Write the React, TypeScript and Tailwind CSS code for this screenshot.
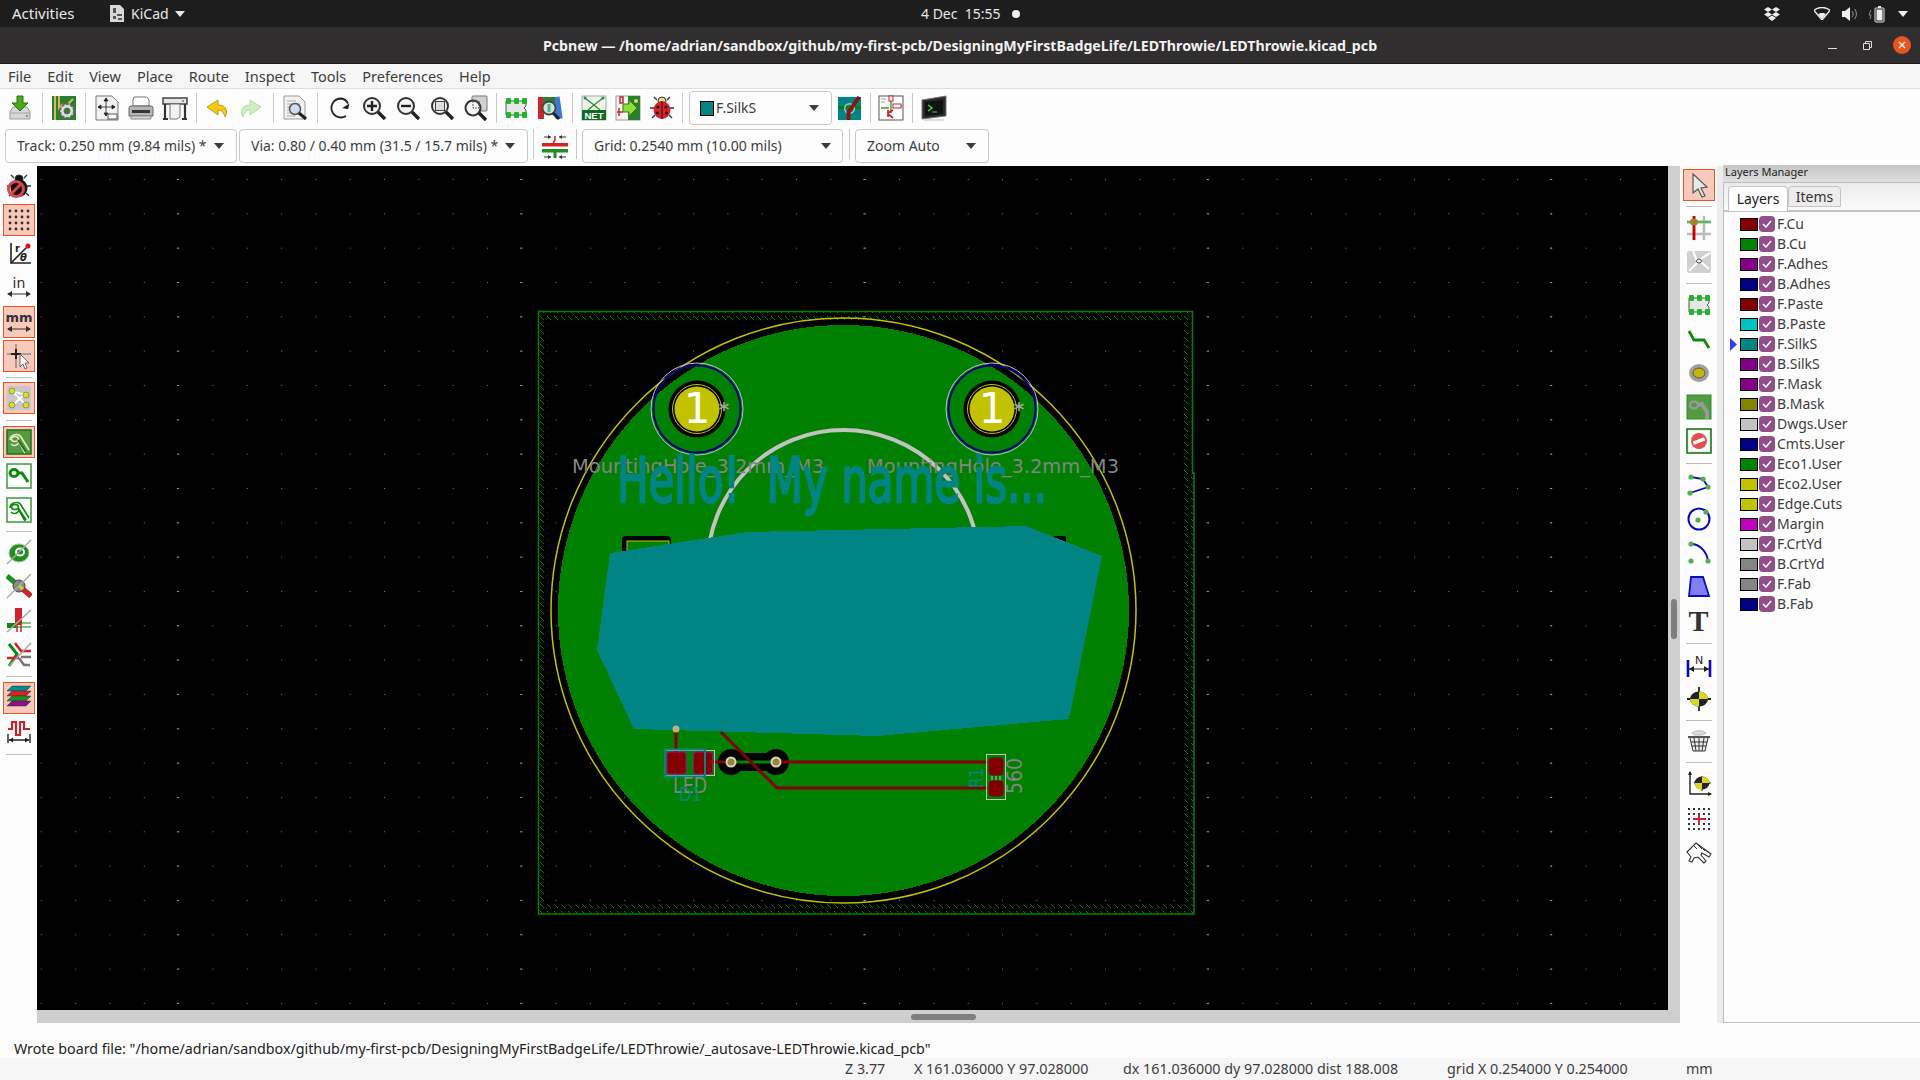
import React from "react";

// Layer list for the manager panel
const LAYERS = [
  { name: "F.Cu", color: "#840000" },
  { name: "B.Cu", color: "#008400" },
  { name: "F.Adhes", color: "#840084" },
  { name: "B.Adhes", color: "#000084" },
  { name: "F.Paste", color: "#840000" },
  { name: "B.Paste", color: "#00c2c2" },
  { name: "F.SilkS", color: "#008484", active: true },
  { name: "B.SilkS", color: "#840084" },
  { name: "F.Mask", color: "#840084" },
  { name: "B.Mask", color: "#848400" },
  { name: "Dwgs.User", color: "#c2c2c2" },
  { name: "Cmts.User", color: "#000084" },
  { name: "Eco1.User", color: "#008400" },
  { name: "Eco2.User", color: "#c2c200" },
  { name: "Edge.Cuts", color: "#c2c200" },
  { name: "Margin", color: "#c200c2" },
  { name: "F.CrtYd", color: "#c2c2c2" },
  { name: "B.CrtYd", color: "#848484" },
  { name: "F.Fab", color: "#848484" },
  { name: "B.Fab", color: "#000084" },
];

const Ic = ({ children, size = 26 }: { children: React.ReactNode; size?: number }) => (
  <svg width={size} height={size} viewBox="0 0 26 26" fill="none">
    {children}
  </svg>
);

const Caret = ({ color = "#3d3d3d" }: { color?: string }) => (
  <svg width="10" height="6" viewBox="0 0 10 6">
    <path d="M0 0h10L5 6z" fill={color} />
  </svg>
);

const Tool = ({ children }: { children: React.ReactNode }) => (
  <div className="w-[34px] h-[34px] shrink-0 flex items-center justify-center">{children}</div>
);

const VSep = ({ className }: { className: string }) => (
  <div className={`${className} h-[30px] shrink-0 flex justify-center`}>
    <div className="w-px h-full bg-[#c9c9c9]" />
  </div>
);

const HSep = ({ className }: { className: string }) => (
  <div className={`${className} w-full shrink-0 flex items-center justify-center`}>
    <div className="w-[26px] h-px bg-[#bdbdbd]" />
  </div>
);

// Square side tool, optionally in the pressed orange state
const Side = ({ on, children }: { on?: boolean; children: React.ReactNode }) => (
  <div className="w-full h-[34px] shrink-0 flex items-center justify-center">
    <div className={on ? "w-[32px] h-[32px] border border-[#e95420] bg-[#f9c9bb] flex items-center justify-center" : "w-[32px] h-[32px] flex items-center justify-center"}>
      {children}
    </div>
  </div>
);

const Combo = ({ className, children }: { className: string; children: React.ReactNode }) => (
  <div className={`${className} h-[34px] shrink-0 border border-[#c8c8c8] rounded-[4px] bg-[#fdfdfd] flex items-center justify-between text-[14px] text-[#3d3d3d]`}>
    {children}
  </div>
);

const Glass = ({ children }: { children?: React.ReactNode }) => (
  <Ic>
    <circle cx="11" cy="11" r="8" stroke="#333" strokeWidth="2" fill="#f4f4f4" />
    {children}
    <path d="M17 17l7 7" stroke="#222" strokeWidth="3.4" />
  </Ic>
);

const Chip = () => (
  <Ic>
    <path d="M3 6h20v5l-2 2 2 2v5H3z" fill="#e6e6e6" stroke="#555" />
    {[3, 11, 19].map((x) => (
      <g key={x}>
        <rect x={x} y="3" width="5" height="6" rx="1" fill="#22b52c" />
        <rect x={x} y="17" width="5" height="6" rx="1" fill="#22b52c" />
      </g>
    ))}
  </Ic>
);

const Bug = ({ off }: { off?: boolean }) => (
  <Ic>
    <path d="M8 5L5 2M18 5l3-3M5 13H1M25 13h-4M6 20l-3 3M20 20l3 3" stroke="#333" strokeWidth="1.4" />
    <circle cx="13" cy="6" r="4" fill={off ? "#111" : "#e8d890"} stroke="#333" />
    <ellipse cx="13" cy="15" rx="8.5" ry="9" fill={off ? "#111" : "#d3242c"} />
    {!off && (
      <g fill="#301010">
        <path d="M13 6v18" stroke="#301010" />
        <circle cx="9" cy="12" r="1.6" />
        <circle cx="17" cy="12" r="1.6" />
        <circle cx="8.5" cy="18" r="1.6" />
        <circle cx="17.5" cy="18" r="1.6" />
      </g>
    )}
    {off && (
      <g>
        <circle cx="10" cy="16" r="7.5" stroke="#d8474a" strokeWidth="3" fill="none" />
        <path d="M5 21L15 11" stroke="#d8474a" strokeWidth="3" />
      </g>
    )}
  </Ic>
);

const Meander = () => (
  <Ic>
    <path d="M2 10h4V3h4v13h4V3h4v7h6" stroke="#c8262a" strokeWidth="2.2" />
    <path d="M2 15v9M24 15v9M3 21h20" stroke="#222" strokeWidth="1.4" />
    <path d="M3 21l4-2.5v5zM23 21l-4-2.5v5z" fill="#222" />
  </Ic>
);

// Route tool: single or differential trace with a round end
const TraceIcon = ({ inner, filled }: { inner?: boolean; filled?: boolean }) => {
  const line = filled ? "#f0e6c0" : "#0c8a0c";
  return (
    <Ic>
      <rect x="1" y="1" width="24" height="24" fill={filled ? "#539b3f" : "#fff"} stroke={filled ? "#1f6f1f" : "#3a9a3a"} strokeWidth="1.5" />
      {inner ? (
        <g>
          <path d="M4 11c0-6 9-7 11-3l8 13" stroke={line} strokeWidth="1.6" />
          <path d="M5 15c3 3 7 1 8-2l6 11" stroke={line} strokeWidth="1.6" />
          <ellipse cx="9" cy="10" rx="3.5" ry="2.5" stroke={line} strokeWidth="1.6" />
          <path d="M12 11l8 12" stroke={filled ? "#1f6f1f" : "#0c8a0c"} strokeWidth="2" />
        </g>
      ) : (
        <g>
          <ellipse cx="8" cy="10" rx="4" ry="3.5" stroke="#0c8a0c" strokeWidth="3" />
          <path d="M12 10h4l6 9" stroke="#0c8a0c" strokeWidth="3" />
        </g>
      )}
    </Ic>
  );
};

const Dots = () => (
  <Ic>
    {[5, 11, 17, 23].map((x) => [5, 11, 17, 23].map((y) => <circle key={`${x}-${y}`} cx={x - 1} cy={y - 1} r="1.4" fill="#333" />))}
  </Ic>
);

const Pcb = () => (
  <svg width="1631" height="844" viewBox="37 166 1631 844" fill="none" className="block">
    <defs>
      <pattern id="grid" x="1311" y="179" width="34.33" height="34.33" patternUnits="userSpaceOnUse">
        <rect width="1" height="1" fill="#777" />
      </pattern>
      <pattern id="gridBright" x="1550" y="179" width="343.3" height="34.33" patternUnits="userSpaceOnUse">
        <rect width="2" height="1" fill="#999" />
      </pattern>
      <pattern id="hatch" x="0" y="0" width="7" height="7" patternUnits="userSpaceOnUse">
        <path d="M1 1l4 4" stroke="#008400" strokeWidth="1" />
      </pattern>
    </defs>
    <rect x="37" y="166" width="1631" height="844" fill="#000" />
    <rect x="37" y="166" width="1631" height="844" fill="url(#grid)" />
    <rect x="37" y="166" width="1631" height="844" fill="url(#gridBright)" />

    {/* page frame with hatching */}
    <path d="M543 316H1187V478H1189V909H543Z" stroke="url(#hatch)" strokeWidth="9" />
    <path d="M538.5 311.5H1192.5V473H1194V914H538.5Z" stroke="#008400" strokeWidth="1.5" />

    <circle cx="843.5" cy="610.5" r="292.5" stroke="#c2c200" strokeWidth="1.5" />
    <circle cx="843.5" cy="610.5" r="285.5" fill="#008000" shapeRendering="crispEdges" />

    {/* arc on the silk */}
    <circle cx="843.5" cy="566" r="136" stroke="#c2c2c2" strokeWidth="4" />

    {/* mounting holes */}
    {[697, 992].map((x) => (
      <g key={x}>
        <circle cx={x} cy="409" r="46" stroke="#c2c2c2" strokeWidth="1" />
        <circle cx={x} cy="409" r="43.5" stroke="#000084" strokeWidth="2" />
        <circle cx={x} cy="409" r="28.5" fill="#000" />
        <circle cx={x} cy="409" r="24.5" fill="#000" stroke="#c2c200" strokeWidth="1" />
        <circle cx={x} cy="409" r="22.5" fill="#c2c200" />
        <text x={x} y="423" textAnchor="middle" fontSize="42" fill="#fff" fontFamily="'DejaVu Sans', sans-serif">1</text>
        <text x={x + 27} y="416" textAnchor="middle" fontSize="20" fontWeight="700" fill="#a0a0a0" fontFamily="'DejaVu Sans', sans-serif">*</text>
      </g>
    ))}

    <text x="572" y="473" fontSize="20" textLength="252" lengthAdjust="spacingAndGlyphs" fill="#848484" fontFamily="'DejaVu Sans', sans-serif">MountingHole_3.2mm_M3</text>
    <text x="867" y="473" fontSize="20" textLength="252" lengthAdjust="spacingAndGlyphs" fill="#848484" fontFamily="'DejaVu Sans', sans-serif">MountingHole_3.2mm_M3</text>
    <text x="617" y="502" fontSize="62" textLength="430" lengthAdjust="spacingAndGlyphs" fill="#008484" stroke="#008484" strokeWidth="2.4" fontFamily="'DejaVu Sans', sans-serif" className="whitespace-pre">Hello!  My name is...</text>

    {/* parts hidden by the silk polygon */}
    <rect x="622" y="536" width="49" height="24" rx="4" fill="#000" />
    <rect x="627" y="541" width="42" height="20" fill="#008000" stroke="#c2c200" strokeWidth="1" />
    <rect x="1052" y="536" width="14" height="12" rx="2" fill="#000" />

    <polygon points="610,553 747,532 1026,526 1102,556 1069,719 877,736 634,729 597,650" fill="#008484" shapeRendering="crispEdges" />

    {/* traces */}
    <path d="M676 731V752" stroke="#840000" strokeWidth="3" />
    <circle cx="676" cy="729" r="3.5" fill="#c2b080" />
    <rect x="731" y="753" width="45" height="18" fill="#000" />
    <circle cx="731" cy="762" r="13" fill="#000" />
    <circle cx="776" cy="762" r="13" fill="#000" />
    <path d="M713 762H725M782 762H992" stroke="#840000" strokeWidth="3" />
    <path d="M736 762H771" stroke="#008400" strokeWidth="3" />
    <path d="M721 732L777 788H992" stroke="#840000" strokeWidth="3" />
    {[731, 776].map((x) => (
      <g key={x}>
        <circle cx={x} cy="762" r="5.5" fill="#d8d8c8" />
        <circle cx={x} cy="762" r="3.5" fill="#a08430" />
      </g>
    ))}

    {/* LED footprint */}
    <rect x="664.5" y="750.5" width="50" height="25" stroke="#c2c2c2" strokeWidth="1" />
    <rect x="667" y="752" width="19" height="22" rx="3" fill="#840000" stroke="#a000a0" strokeWidth="1" />
    <rect x="693.5" y="752" width="19" height="22" rx="3" fill="#840000" stroke="#a000a0" strokeWidth="1" />
    <rect x="665" y="749.5" width="40" height="27" stroke="#008484" strokeWidth="2" />
    <text x="673" y="793" fontSize="22" textLength="34" lengthAdjust="spacingAndGlyphs" fill="#848484" fontFamily="'DejaVu Sans', sans-serif">LED</text>
    <text x="679" y="801" fontSize="20" textLength="23" lengthAdjust="spacingAndGlyphs" fill="#008484" fontFamily="'DejaVu Sans', sans-serif">D1</text>

    {/* resistor footprint */}
    <rect x="986.5" y="754.5" width="19" height="45" stroke="#c2c2c2" strokeWidth="1" />
    <rect x="988" y="757" width="16" height="19" rx="4" fill="#840000" stroke="#008400" strokeWidth="1" />
    <rect x="988" y="780" width="16" height="17" rx="4" fill="#840000" stroke="#008400" strokeWidth="1" />
    <path d="M992 776v4M996 776v4M1000 776v4" stroke="#c2c2c2" strokeWidth="1" />
    <text transform="translate(983 788) rotate(-90)" fontSize="20" textLength="20" lengthAdjust="spacingAndGlyphs" fill="#008484" fontFamily="'DejaVu Sans', sans-serif">R1</text>
    <text transform="translate(1022 794) rotate(-90)" fontSize="21" textLength="36" lengthAdjust="spacingAndGlyphs" fill="#848484" fontFamily="'DejaVu Sans', sans-serif">560</text>
  </svg>
);

export default function App() {
  return (
    <div className="w-[1920px] h-[1080px] overflow-hidden flex flex-col bg-[#fdfdfd] font-['Noto_Sans',sans-serif] text-[14px] leading-none">
      {/* ─── GNOME top bar ─── */}
      <div className="h-[27px] shrink-0 bg-[#1d1d1d] text-[#e8e8e8] flex items-center">
        <span className="w-[109px] pl-[12px] shrink-0 text-[15px]">Activities</span>
        <svg width="16" height="17" viewBox="0 0 16 17" className="shrink-0">
          <path d="M1 0h10l4 4v13H1z" fill="#d8d8d8" />
          <path d="M4 3h3v5H4zM8 9h5v2H8zM4 11h3v3H4zM9 13h4v2H9z" fill="#555" />
        </svg>
        <span className="ml-[6px] w-[44px] shrink-0">KiCad</span>
        <Caret color="#e8e8e8" />
        <span className="ml-[736px] w-[91px] shrink-0">4 Dec&nbsp;&nbsp;15:55</span>
        <span className="w-[8px] h-[8px] rounded-full bg-[#efefef] shrink-0" />
        <svg width="16" height="14" viewBox="0 0 16 14" className="ml-[744px] shrink-0">
          <path d="M4 0l4 2.5L4 5 0 2.5zM12 0l4 2.5L12 5 8 2.5zM4 5l4 2.5L4 10 0 7.5zM12 5l4 2.5-4 2.5-4-2.5zM8 8.5l4 2.5-4 3-4-3z" fill="#eee" />
        </svg>
        <svg width="16" height="13" viewBox="0 0 16 13" className="ml-[34px] shrink-0">
          <path d="M0 3.5C4-.5 12-.5 16 3.5L8 13z" fill="none" stroke="#eee" strokeWidth="1.4" />
          <path d="M4 7c2-1.500 6-1.500 8 0l-4 5z" fill="#eee" />
        </svg>
        <svg width="15" height="14" viewBox="0 0 15 14" className="ml-[12px] shrink-0">
          <path d="M0 4h3l5-4v14l-5-4H0z" fill="#eee" />
          <path d="M10 4c1.500 2 1.500 4 0 6M12.500 2c2.500 3 2.500 7 0 10" stroke="#999" fill="none" />
        </svg>
        <svg width="18" height="18" viewBox="0 0 18 18" className="ml-[11px] shrink-0">
          <path d="M3 5L1 10h2l-1 4" stroke="#888" fill="none" />
          <rect x="7" y="3" width="9" height="14" rx="1" fill="none" stroke="#eee" />
          <rect x="8.500" y="4.500" width="6" height="11" fill="#eee" />
          <rect x="10" y="1" width="3" height="2" fill="#eee" />
        </svg>
        <span className="ml-[12px]"><Caret color="#eee" /></span>
      </div>

      {/* ─── Title bar ─── */}
      <div className="h-[37px] shrink-0 bg-[#302e2e] border-b border-[#1a1a1a] text-[#f2f2f2] font-bold text-[14.2px] grid grid-cols-[1fr_auto_1fr] items-center">
        <div />
        <span className="pt-[2px]">Pcbnew — /home/adrian/sandbox/github/my-first-pcb/DesigningMyFirstBadgeLife/LEDThrowie/LEDThrowie.kicad_pcb</span>
        <div className="flex items-center justify-end pr-[9px]">
          <span className="w-[9px] h-px bg-[#ddd] mt-[6px]" />
          <svg width="9" height="9" viewBox="0 0 9 9" className="ml-[26px]">
            <path d="M.5 2.500h6v6h-6zM2.500 2.500v-2h6v6h-2" fill="none" stroke="#ddd" />
          </svg>
          <div className="ml-[21px] w-[18px] h-[18px] rounded-full bg-[#e95420] flex items-center justify-center">
            <svg width="8" height="8" viewBox="0 0 8 8"><path d="M1 1l6 6M7 1L1 7" stroke="#fff" strokeWidth="1.200" /></svg>
          </div>
        </div>
      </div>

      {/* ─── Menu bar ─── */}
      <div className="h-[25px] shrink-0 bg-[#f6f6f6] border-b border-[#dedede] flex items-center pl-[8px] text-[#3d3d3d] text-[14.500px] gap-[16px]">
        {["File", "Edit", "View", "Place", "Route", "Inspect", "Tools", "Preferences", "Help"].map((m) => (
          <span key={m}>{m}</span>
        ))}
      </div>

      {/* ─── Main toolbar ─── */}
      <div className="h-[40px] shrink-0 flex items-center pl-[3px] pb-[2px]">
        <Tool><Ic><path d="M3 17l3-5h14l3 5v7H3z" fill="#d6d6d6" stroke="#999" /><path d="M3 18h20" stroke="#aaa" /><circle cx="20" cy="21" r="1" fill="#3a3" /><path d="M10 1h6v7h5l-8 8-8-8h5z" fill="#4aa81e" stroke="#2d6e10" /></Ic></Tool>
        <VSep className="w-[10px]" />
        <Tool>
          <Ic>
            <rect x="1" y="1" width="24" height="24" fill="#2a7f2a" />
            <path d="M4 1v24M8 1v12l4-4M22 4l-6 6" stroke="#d9b560" strokeWidth="2" />
            <circle cx="16" cy="16" r="7" fill="#ddd" stroke="#666" strokeWidth="2" strokeDasharray="3 1.500" />
            <circle cx="16" cy="16" r="3" fill="#2a7f2a" stroke="#666" />
          </Ic>
        </Tool>
        <VSep className="w-[9px]" />
        <Tool><Ic><path d="M2 1h16l6 6v18H2z" fill="#f2f2f2" stroke="#777" /><path d="M12 3v18M4 12h17M12 3l-2 3h4zM12 21l-2-3h4zM4 12l3-2v4zM21 12l-3-2v4z" fill="#222" stroke="#222" strokeWidth=".8" /><rect x="14" y="19" width="9" height="5" fill="#fff" stroke="#555" /></Ic></Tool>
        <Tool><Ic><path d="M6 2h13l2 3v6H5V5z" fill="#fff" stroke="#777" /><path d="M3 11h20a2 2 0 0 1 2 2v8H1v-8a2 2 0 0 1 2-2z" fill="#b5b5b5" stroke="#666" /><rect x="4" y="15" width="18" height="3" fill="#333" /><path d="M3 21h20v3H3z" fill="#d6d6d6" stroke="#888" /></Ic></Tool>
        <Tool><Ic><path d="M1 3h24v6H1z" fill="#e6e6e6" stroke="#444" strokeWidth="1.500" /><circle cx="21" cy="6" r="1" fill="#3a3" /><path d="M3 9v15M23 9v15M1 24h5M20 24h5" stroke="#333" strokeWidth="2.200" /><path d="M8 9h10v13l-3 2H8z" fill="#f4f4f4" stroke="#777" /></Ic></Tool>
        <VSep className="w-[8px]" />
        <Tool><Ic><path d="M21 23c3-5 2-12-7-12V6L3 13l11 8v-5c4 0 6 3 7 7z" fill="#f6c915" stroke="#c99a10" transform="translate(0 -1)" /></Ic></Tool>
        <Tool><Ic><path d="M5 23c-3-5-2-12 7-12V6l11 7-11 8v-5c-4 0-6 3-7 7z" fill="#cdeec0" stroke="#b3dca4" transform="translate(0 -1)" /></Ic></Tool>
        <VSep className="w-[10px]" />
        <Tool><Ic><path d="M2 1h15l6 6v17H2z" fill="#f2f2f2" stroke="#999" /><path d="M5 6h9M5 9h13M5 12h3M5 15h3M5 18h3M5 21h8" stroke="#aaa" /><circle cx="13" cy="14" r="5.500" fill="#cfdcf0" stroke="#555" strokeWidth="1.500" /><path d="M17 18l7 6" stroke="#222" strokeWidth="3" /></Ic></Tool>
        <VSep className="w-[11px]" />
        <Tool><Ic><path d="M19 21A9.500 9.500 0 1 1 13 3.500c4 0 6.500 2 8 5" stroke="#222" strokeWidth="1.800" /><path d="M22 8v6h-6z" fill="#222" transform="rotate(12 20 10)" /></Ic></Tool>
        <Tool><Glass><path d="M6 11h10M11 6v10" stroke="#222" strokeWidth="2.400" /></Glass></Tool>
        <Tool><Glass><path d="M6 11h10" stroke="#222" strokeWidth="2.400" /></Glass></Tool>
        <Tool><Glass><rect x="6.500" y="6.500" width="9" height="9" fill="#ddd" stroke="#444" /></Glass></Tool>
        <Tool><Ic><rect x="9" y="1" width="15" height="15" rx="1" fill="#d0d0d0" stroke="#777" /><circle cx="10" cy="13" r="7.500" stroke="#333" strokeWidth="2" fill="#f6f6f6" /><rect x="10" y="6" width="6" height="7" fill="none" stroke="#555" strokeDasharray="2 1" /><path d="M16 18l7 7" stroke="#222" strokeWidth="3.400" /></Ic></Tool>
        <VSep className="w-[6px]" />
        <Tool><Chip /></Tool>
        <Tool><Ic><rect x="1" y="2" width="6" height="22" fill="#c8262a" /><rect x="17" y="2" width="7" height="22" fill="#3b78d8" transform="rotate(-8 20 12)" /><rect x="6" y="2" width="12" height="6" fill="#2a7f2a" /><circle cx="12" cy="13" r="6.500" fill="#cfe8cf" stroke="#444" strokeWidth="1.800" /><path d="M12 9v8" stroke="#5aa" strokeWidth="3" /><path d="M16 18l6 6" stroke="#222" strokeWidth="3" /></Ic></Tool>
        <VSep className="w-[10px]" />
        <Tool><Ic><rect x="1" y="1" width="24" height="24" fill="#eef3ee" stroke="#aaa" /><path d="M4 3l9 7 9-7M13 10l-6 5M13 10l6 5" stroke="#2f8a2f" strokeWidth="1.200" /><circle cx="4" cy="3" r="1.500" fill="#2f8a2f" /><circle cx="22" cy="3" r="1.500" fill="#2f8a2f" /><rect x="1" y="15" width="24" height="10" fill="#0f6d22" /><text x="13" y="24" textAnchor="middle" fontSize="9.500" fontWeight="700" fill="#fff" fontFamily="'Liberation Sans', sans-serif">NET</text></Ic></Tool>
        <Tool><Ic><rect x="1" y="1" width="24" height="24" fill="#f4f4f4" stroke="#999" /><path d="M13 1h12v24H13z" fill="#2a7f2a" /><path d="M5 2h3v6H5zM4 13v8M2 17h6" stroke="#c8262a" strokeWidth="1.500" /><circle cx="21" cy="6" r="2" fill="#d8d870" /><path d="M8 9h6V5l8 8-8 8v-4H8z" fill="#8fdc3a" stroke="#3a7f14" /></Ic></Tool>
        <Tool><Bug /></Tool>
        <VSep className="ml-[-1px] w-[8px]" />
        <Combo className="ml-[3px] w-[143px] pl-[10px] pr-[12px]">
          <div className="flex items-center">
            <span className="w-[14px] h-[15px] bg-[#008484] border border-black" />
            <span className="ml-[2px]">F.SilkS</span>
          </div>
          <Caret />
        </Combo>
        <Tool><Ic size={25}><rect x="1" y="1" width="24" height="24" fill="#008484" /><path d="M1 12h24" stroke="#0a7d0a" strokeWidth="3" /><circle cx="13" cy="13" r="5" stroke="#bbb" strokeWidth="1.500" /><path d="M12 25v-8l11-16" stroke="#8c1212" strokeWidth="4" /></Ic></Tool>
        <VSep className="w-[8px]" />
        <Tool><Ic><rect x="1" y="1" width="24" height="24" fill="#fff" stroke="#555" /><path d="M13 1v7M3 13h8M13 8v10M18 11h6" stroke="#4c9a2a" strokeWidth="1.500" /><rect x="11" y="1" width="4" height="5" fill="#fff" stroke="#c8262a" /><rect x="15" y="9" width="8" height="4" fill="#fff" stroke="#c8262a" /><path d="M10 15v7M10 18l5-3M10 19l5 4" stroke="#c8262a" strokeWidth="1.800" /><path d="M3 4h5M3 7h4" stroke="#999" /></Ic></Tool>
        <VSep className="w-[9px]" />
        <Tool><Ic><path d="M1 5L25 1v20L1 24z" fill="#2a2a2a" stroke="#777" /><path d="M4 7l18-2v14L4 21z" fill="#111" /><path d="M7 10l4 3-4 3" stroke="#30e040" strokeWidth="1.500" /><path d="M11 17h5" stroke="#30e040" /><path d="M3 25h20" stroke="#bbb" /></Ic></Tool>
      </div>

      {/* ─── Second toolbar: sizes and grid ─── */}
      <div className="h-[37px] shrink-0 flex items-start pl-[5px]">
        <Combo className="w-[232px] pl-[11px] pr-[12px]"><span>Track: 0.250 mm (9.84 mils) *</span><Caret /></Combo>
        <Combo className="ml-[2px] w-[289px] pl-[11px] pr-[12px]"><span>Via: 0.80 / 0.40 mm (31.5 / 15.7 mils) *</span><Caret /></Combo>
        <VSep className="w-[10px]" />
        <div className="w-[34px] h-[34px] shrink-0 flex items-center justify-center">
          <svg width="26" height="26" viewBox="0 0 26 26">
            <path d="M2 4h7M17 4h7M2 24h7M17 24h7" stroke="#333" />
            <path d="M9 4l-3-2v4zM17 4l3-2v4zM9 24l-3-2v4zM17 24l3-2v4z" fill="#333" />
            <path d="M13 3v4l-2 3" stroke="#c8262a" strokeWidth="1.500" fill="none" />
            <rect x="0" y="10" width="26" height="3.500" fill="#d5222a" />
            <rect x="0" y="16" width="26" height="3.500" fill="#1f8f1f" />
            <path d="M13 19v6" stroke="#1f8f1f" strokeWidth="3" />
          </svg>
        </div>
        <VSep className="w-[9px]" />
        <Combo className="ml-[1px] w-[261px] pl-[11px] pr-[11px]"><span>Grid: 0.2540 mm (10.00 mils)</span><Caret /></Combo>
        <VSep className="w-[12px]" />
        <Combo className="w-[134px] pl-[11px] pr-[12px]"><span>Zoom Auto</span><Caret /></Combo>
      </div>

      {/* ─── Work area ─── */}
      <div className="h-[857px] shrink-0 flex">
        {/* Left tools */}
        <div className="w-[37px] shrink-0 flex flex-col pt-[3px] bg-[#fdfdfd]">
          <Side><Bug off /></Side>
          <Side on><Dots /></Side>
          <Side><Ic><path d="M5 2v20h20" stroke="#222" strokeWidth="1.600" /><path d="M5 22L22 5" stroke="#222" strokeWidth="1.600" /><circle cx="22" cy="5" r="2.500" fill="#e01010" /><text x="9" y="11" fontSize="10" fontWeight="700" fill="#222" fontFamily="'DejaVu Sans', sans-serif">r</text><text x="14" y="20" fontSize="10" fontStyle="italic" fontWeight="700" fill="#222" fontFamily="'DejaVu Sans', sans-serif">θ</text></Ic></Side>
          <Side><Ic><text x="13" y="13" textAnchor="middle" fontSize="14" fill="#333" fontFamily="'DejaVu Sans', sans-serif">in</text><path d="M2 19h22" stroke="#333" /><path d="M1 19l5-3v6zM25 19l-5-3v6z" fill="#333" /></Ic></Side>
          <Side on><Ic><text x="13" y="13" textAnchor="middle" fontSize="13" fontWeight="700" fill="#333" fontFamily="'DejaVu Sans', sans-serif">mm</text><path d="M2 20h22" stroke="#333" /><path d="M1 20l5-3v6zM25 20l-5-3v6z" fill="#333" /></Ic></Side>
          <Side on><Ic><path d="M1 11h24M10 1v24" stroke="#8c8c8c" strokeWidth="1.600" /><path d="M5 11h10M10 6v10" stroke="#222" strokeWidth="2" /><path d="M14 11l9 9-4 0 2 5-2 1-2-5-3 3z" fill="#fff" stroke="#666" /></Ic></Side>
          <HSep className="h-[8px]" />
          <Side on><Ic><rect x="1" y="1" width="24" height="24" rx="2" fill="#c8c8c8" /><path d="M6 6l14 4M6 6l14 14M7 20L20 8" stroke="#fff" strokeWidth="1.800" /><circle cx="6" cy="6" r="3" fill="#d8e020" stroke="#555" strokeWidth=".5" /><circle cx="20" cy="10" r="3" fill="#d8e020" stroke="#555" strokeWidth=".5" /><circle cx="6" cy="20" r="3" fill="#d8e020" stroke="#555" strokeWidth=".5" /><circle cx="20" cy="20" r="3" fill="#d8e020" stroke="#555" strokeWidth=".5" /></Ic></Side>
          <HSep className="h-[10px]" />
          <Side on><TraceIcon inner filled /></Side>
          <Side><TraceIcon /></Side>
          <Side><TraceIcon inner /></Side>
          <HSep className="h-[8px]" />
          <Side><Ic><ellipse cx="13" cy="14" rx="10" ry="9" fill="#1f8f1f" stroke="#9bc89b" /><ellipse cx="14" cy="13" rx="5" ry="4.500" fill="#fff" /><ellipse cx="14" cy="13" rx="3" ry="2.500" fill="#1f8f1f" /><path d="M1 25L25 1" stroke="#aaa" strokeWidth="1.500" /></Ic></Side>
          <Side><Ic><path d="M1 3l24 20" stroke="#1f8f1f" strokeWidth="5" /><path d="M13 13l12 10" stroke="#d5222a" strokeWidth="5" /><circle cx="13" cy="13" r="6" fill="#888" stroke="#444" /><path d="M13 13l4 3" stroke="#d5d522" strokeWidth="3" /><path d="M1 25L25 1" stroke="#aaa" strokeWidth="1.500" /></Ic></Side>
          <Side><Ic><rect x="9" y="1" width="7" height="17" fill="#d5222a" /><path d="M11 18v7M15 18v7" stroke="#d5222a" strokeWidth="1.500" /><rect x="1" y="16" width="9" height="5" fill="#0f8a0f" /><path d="M10 16h15M10 20h15" stroke="#0f8a0f" /><path d="M1 25L25 3" stroke="#aaa" strokeWidth="1.500" /></Ic></Side>
          <Side><Ic><path d="M3 3l8 10-8 12" stroke="#0f8a0f" strokeWidth="3" /><path d="M9 2l6 8h10" stroke="#d5222a" strokeWidth="2.500" /><path d="M1 17h12" stroke="#d5222a" strokeWidth="2.500" /><path d="M13 17l5 7h6M15 16h10" stroke="#777" strokeWidth="2.500" /><path d="M3 25L25 2" stroke="#aaa" strokeWidth="1.500" /></Ic></Side>
          <HSep className="h-[10px]" />
          <Side on><Ic><path d="M1 6l5-5h19l-5 5z" fill="#008b8b" stroke="#333" strokeWidth=".5" /><path d="M1 11l5-5h19l-5 5z" fill="#d5222a" stroke="#333" strokeWidth=".5" /><path d="M1 16l5-5h19l-5 5z" fill="#1f8f1f" stroke="#333" strokeWidth=".5" /><path d="M1 21l5-5h19l-5 5z" fill="#8b108b" stroke="#333" strokeWidth=".5" /></Ic></Side>
          <Side><Meander /></Side>
          <HSep className="h-[10px]" />
        </div>

        {/* Canvas with scrollbars */}
        <div className="w-[1643px] shrink-0 flex flex-col">
          <div className="h-[844px] shrink-0 flex">
            <Pcb />
            <div className="flex-1 bg-[#cfcfcf] relative">
              <div className="absolute left-[3px] top-[433px] w-[6px] h-[40px] rounded-full bg-[#7f7f7f]" />
            </div>
          </div>
          <div className="flex-1 bg-[#cfcfcf] relative">
            <div className="absolute left-[874px] top-[4px] w-[65px] h-[6px] rounded-full bg-[#7f7f7f]" />
          </div>
        </div>

        {/* Right tools */}
        <div className="w-[37px] shrink-0 flex flex-col pt-[2px] bg-[#fdfdfd]">
          <Side on><Ic><path d="M7 2l14 13-6 1 4 8-3 1-4-8-5 4z" fill="#e8e8e8" stroke="#555" strokeWidth="1.200" /></Ic></Side>
          <HSep className="h-[9px]" />
          <Side><Ic><path d="M1 7h24M1 19h24M8 1v24M18 1v24" stroke="#bbb" strokeWidth="2.500" /><path d="M1 7h24" stroke="#5cb85c" strokeWidth="2.500" /><path d="M8 1v24" stroke="#cc0000" strokeWidth="2.800" /><ellipse cx="8" cy="7" rx="4" ry="3.500" fill="#a08430" /></Ic></Side>
          <Side><Ic><rect x="1" y="2" width="24" height="22" rx="2" fill="#d0d0d0" /><path d="M3 22l8-8M13 11L24 4M11 12L7 2M15 13l8 7" stroke="#fff" strokeWidth="2" /><ellipse cx="13" cy="12" rx="2.500" ry="2" fill="#eee" stroke="#555" /></Ic></Side>
          <HSep className="h-[9px]" />
          <Side><Chip /></Side>
          <Side><Ic><path d="M3 5l5 9h10l5 8" stroke="#0f8a0f" strokeWidth="2.800" /></Ic></Side>
          <Side><Ic><ellipse cx="13" cy="13" rx="10" ry="9" fill="#a0a0a0" /><ellipse cx="13" cy="13" rx="6" ry="5" fill="#c2b800" stroke="#555" /></Ic></Side>
          <Side><Ic><rect x="1" y="1" width="24" height="24" fill="#539b3f" stroke="#2b8f2b" /><path d="M12 11l4-1 5 8v7" stroke="#999" strokeWidth="4" /><ellipse cx="8" cy="11" rx="4" ry="3.500" fill="#539b3f" stroke="#999" strokeWidth="2.500" /></Ic></Side>
          <Side><Ic><rect x="1" y="1" width="24" height="24" fill="#e6f4e6" stroke="#0f6d0f" strokeWidth="1.500" /><rect x="3" y="3" width="20" height="20" fill="#fff" /><circle cx="13" cy="13" r="8" fill="#e25050" /><path d="M7 13h12" stroke="#fff" strokeWidth="3.500" transform="rotate(-20 13 13)" /></Ic></Side>
          <HSep className="h-[10px]" />
          <Side><Ic><path d="M5 5l12 2 5 8L4 21" stroke="#0a0ac2" strokeWidth="1.800" /><circle cx="5" cy="5" r="2.600" fill="#50b050" /><circle cx="17" cy="7" r="2.600" fill="#50b050" /><circle cx="22" cy="15" r="2.600" fill="#50b050" /><circle cx="4" cy="21" r="2.600" fill="#50b050" /></Ic></Side>
          <Side><Ic><circle cx="13" cy="13" r="10.500" stroke="#0a0ac2" strokeWidth="2" /><circle cx="12" cy="14" r="2.600" fill="#50b050" /><circle cx="20" cy="6" r="2.600" fill="#50b050" /></Ic></Side>
          <Side><Ic><path d="M5 4c9 0 16 8 17 17" stroke="#0a0ac2" strokeWidth="2" /><circle cx="5" cy="4" r="2.600" fill="#50b050" /><circle cx="22" cy="21" r="2.600" fill="#50b050" /><circle cx="5" cy="21" r="2.600" fill="#50b050" /></Ic></Side>
          <Side><Ic><path d="M5 3h12l6 19H3z" fill="#8080f0" stroke="#0a0ac2" strokeWidth="1.800" /></Ic></Side>
          <Side><span className="font-['Liberation_Serif',serif] text-[30px] font-bold text-[#333]">T</span></Side>
          <HSep className="h-[10px]" />
          <Side><Ic><path d="M2 8v17M24 8v17" stroke="#0a0ac2" strokeWidth="2.600" /><path d="M3 17h20" stroke="#222" /><path d="M3 17l5-3v6zM23 17l-5-3v6z" fill="#222" /><text x="13" y="12" textAnchor="middle" fontSize="11" fill="#222" fontFamily="'DejaVu Sans', sans-serif">N</text></Ic></Side>
          <Side><Ic><path d="M1 13h24M13 1v24" stroke="#222" strokeWidth="1.800" /><ellipse cx="13" cy="13" rx="9" ry="7.500" fill="#222" /><path d="M13 13H4a9 7.500 0 0 0 9 7.500zM13 13h9a9 7.500 0 0 0-9-7.500z" fill="#d8d820" /></Ic></Side>
          <HSep className="h-[8px]" />
          <Side><Ic><path d="M6 5c5-3 10-3 14 0l-4 2H8z" fill="#ddd" stroke="#bbb" /><path d="M2 9h22" stroke="#555" strokeWidth="2" /><path d="M4 10l3 13h12l3-13" fill="#eee" stroke="#333" /><path d="M8 10l2 13M13 10v13M18 10l-2 13M5 14h16M6 18h14" stroke="#333" /></Ic></Side>
          <HSep className="h-[9px]" />
          <Side><Ic><path d="M4 1v22h21" stroke="#222" strokeWidth="1.400" /><path d="M4 0l-2 4h4zM26 23l-4-2v4z" fill="#222" /><path d="M8 12h17M16 5v15" stroke="#222" /><ellipse cx="16" cy="12" rx="7.500" ry="6.500" fill="#222" /><path d="M16 12H8.500a7.500 6.500 0 0 0 7.500 6.500zM16 12h7.500a7.500 6.500 0 0 0-7.500-6.500z" fill="#d8d820" /></Ic></Side>
          <Side><Ic>{[3, 8, 13, 18, 23].map((x) => [4, 9, 14, 19, 24].map((y) => <rect key={`${x}-${y}`} x={x - 1} y={y - 1} width="2" height="2" fill="#333" />))}<path d="M13 9v11M7 14h13" stroke="#d5222a" strokeWidth="2" /></Ic></Side>
          <Side><Ic><path d="M1 13L10 4l15 11-2 3-7-4-1 2 5 6-2 2-6-6-4 1-2 4-3-1 2-4z" fill="#fff" stroke="#333" strokeWidth="1.100" /><path d="M8 7l3 3M11 5l3 3M14 8l2 2M17 10l2 2" stroke="#333" /></Ic></Side>
        </div>

        <div className="w-[6px] shrink-0 bg-[#ececec]" />

        {/* Layers manager */}
        <div className="w-[197px] shrink-0 flex flex-col bg-[#fdfdfd] -mt-[1px]">
          <div className="h-[17px] shrink-0 bg-gradient-to-b from-[#c4c4c4] to-[#e2e2e2] pl-[2px] pb-[4px] flex items-center text-[11px] text-[#222]">Layers Manager</div>
          <div className="flex-1 flex flex-col border-l border-b border-[#bdbdbd] border-t">
            <div className="h-[29px] shrink-0 bg-gradient-to-b from-[#ececec] to-[#fbfbfb] border-b-2 border-[#c4c4c4] flex items-start pl-[4px] pt-[3px]">
              <div className="w-[60px] h-[25px] bg-[#fdfdfd] border border-b-0 border-[#c4c4c4] rounded-t-[4px] flex items-center justify-center text-[#222]">Layers</div>
              <div className="w-[53px] h-[21px] bg-[#ececec] border border-[#c4c4c4] rounded-t-[4px] flex items-center justify-center text-[#333]">Items</div>
            </div>
            <div className="flex-1 flex flex-col pt-[2px]">
              {LAYERS.map((l) => (
                <div key={l.name} className="h-[20px] shrink-0 flex items-center pl-[6px]">
                  <div className="w-[10px] shrink-0">
                    {l.active && (
                      <svg width="7" height="13" viewBox="0 0 7 13"><path d="M0 0l7 6.500L0 13z" fill="#3a3aff" /></svg>
                    )}
                  </div>
                  <span className="w-[18px] h-[13px] border border-black shrink-0" style={{ backgroundColor: l.color }} />
                  <span className="ml-[1px] w-[16px] h-[16px] rounded-[4px] bg-[#924d8b] flex items-center justify-center shrink-0">
                    <svg width="10" height="8" viewBox="0 0 10 8"><path d="M1 4l3 3 5-6" stroke="#fff" strokeWidth="1.500" fill="none" /></svg>
                  </span>
                  <span className="ml-[2px] text-[#3d3d3d]">{l.name}</span>
                </div>
              ))}
            </div>
          </div>
        </div>
      </div>

      {/* ─── Message + status ─── */}
      <div className="h-[35px] shrink-0 bg-[#fdfdfd] flex items-end pl-[14px] pb-[2px] text-[#222] text-[14.280px]">
        Wrote board file: "/home/adrian/sandbox/github/my-first-pcb/DesigningMyFirstBadgeLife/LEDThrowie/_autosave-LEDThrowie.kicad_pcb"
      </div>
      <div className="flex-1 bg-[#f6f6f6] flex items-center text-[#3d3d3d] text-[14.300px] pl-[845px]">
        <span className="w-[69px] shrink-0">Z 3.77</span>
        <span className="w-[209px] shrink-0">X 161.036000  Y 97.028000</span>
        <span className="w-[324px] shrink-0">dx 161.036000  dy 97.028000  dist 188.008</span>
        <span className="w-[239px] shrink-0">grid X 0.254000  Y 0.254000</span>
        <span>mm</span>
      </div>
    </div>
  );
}
